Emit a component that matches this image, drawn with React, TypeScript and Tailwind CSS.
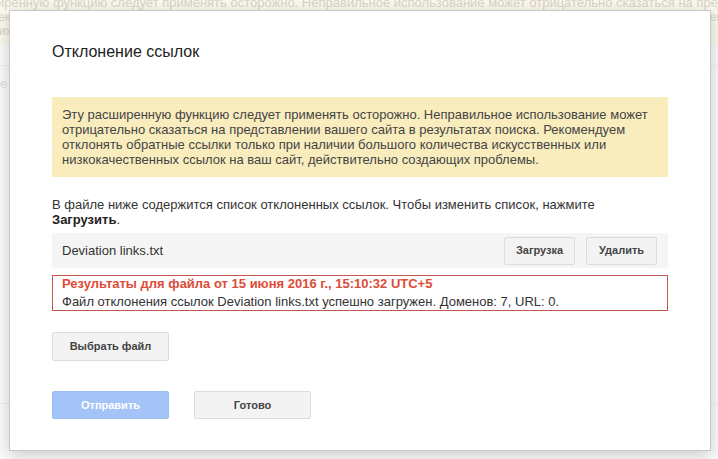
import React from "react";

const font = { fontFamily: '"Liberation Sans", Arial, sans-serif' };

function GrayButton({ children, className = "" }: { children: React.ReactNode; className?: string }) {
  return (
    <button
      className={`flex items-center justify-center rounded-[2px] border border-[#dcdcdc] bg-[#f3f3f3] text-[11px] font-bold text-[#444] ${className}`}
    >
      {children}
    </button>
  );
}

export default function App() {
  return (
    <div className="relative h-[459px] w-[718px] overflow-hidden bg-[#fbfbfb]" style={font}>
      {/* page behind the modal, washed out */}
      <div className="h-[45px] overflow-hidden bg-[#fcf9ee] text-[12px] leading-[14px] text-[#d9d5c9]">
        <div className="-mt-[4px] ml-[-60px] whitespace-nowrap text-[13px]">
          Эту расширенную функцию следует применять осторожно. Неправильное использование может отрицательно сказаться на представлении
        </div>
        <div className="flex justify-between whitespace-nowrap">
          <span className="ml-[-2px]">ек</span>
          <span className="mr-[-5px]">ен</span>
        </div>
        <div className="ml-[-1px]">их</div>
      </div>
      <div className="mt-[20px] h-px bg-[#f0f0f0]" />
      <div className="pt-[8px] text-[13px] text-[#e0e0e0]">e</div>
      <div className="mt-[309px] h-px bg-[#f1f1f1]" />

      {/* modal */}
      <div className="absolute left-[9px] top-[10px] flex h-[441px] w-[702px] flex-col border border-[rgba(0,0,0,0.22)] bg-white px-[42px] pt-[31px] shadow-[0_4px_16px_rgba(0,0,0,0.2)]">
        <h2 className="text-[16px] leading-[20px] text-[#222]">Отклонение ссылок</h2>

        <div className="mt-[35px] h-[80px] bg-[#f9edbe] px-[10px] py-[10px] text-[13px] leading-[15px] text-[#444]">
          Эту расширенную функцию следует применять осторожно. Неправильное использование может отрицательно сказаться на представлении вашего сайта в результатах поиска. Рекомендуем отклонять обратные ссылки только при наличии большого количества искусственных или низкокачественных ссылок на ваш сайт, действительно создающих проблемы.
        </div>

        <p className="mt-[20px] text-[13px] leading-[15px] text-[#333]">
          В файле ниже содержится список отклоненных ссылок. Чтобы изменить список, нажмите
          <br />
          <b className="text-[#222]">Загрузить</b>.
        </p>

        <div className="mt-[6px] flex h-[35px] items-center justify-between bg-[#f5f5f5] pl-[10px] pr-[11px]">
          <span className="text-[13px] text-[#333]">Deviation links.txt</span>
          <div className="flex gap-[11px]">
            <GrayButton className="h-[28px] w-[71px]">Загрузка</GrayButton>
            <GrayButton className="h-[28px] w-[71px]">Удалить</GrayButton>
          </div>
        </div>

        <div className="mt-[7px] h-[36px] border border-[#c0574e] px-[9px] text-[13px] leading-[15px]">
          <div className="font-bold text-[#dd4b39]">Результаты для файла от 15 июня 2016 г., 15:10:32 UTC+5</div>
          <div className="mt-[3px] text-[#333]">
            Файл отклонения ссылок Deviation links.txt успешно загружен. Доменов: 7, URL: 0.
          </div>
        </div>

        <GrayButton className="mt-[21px] h-[29px] w-[117px]">Выбрать файл</GrayButton>

        <div className="mt-[30px] flex gap-[25px]">
          <button className="flex h-[28px] w-[117px] items-center justify-center rounded-[2px] border border-[#9dbcf3] bg-[#a4c4f8] text-[11px] font-bold text-white">
            Отправить
          </button>
          <GrayButton className="h-[28px] w-[117px]">Готово</GrayButton>
        </div>
      </div>
    </div>
  );
}
